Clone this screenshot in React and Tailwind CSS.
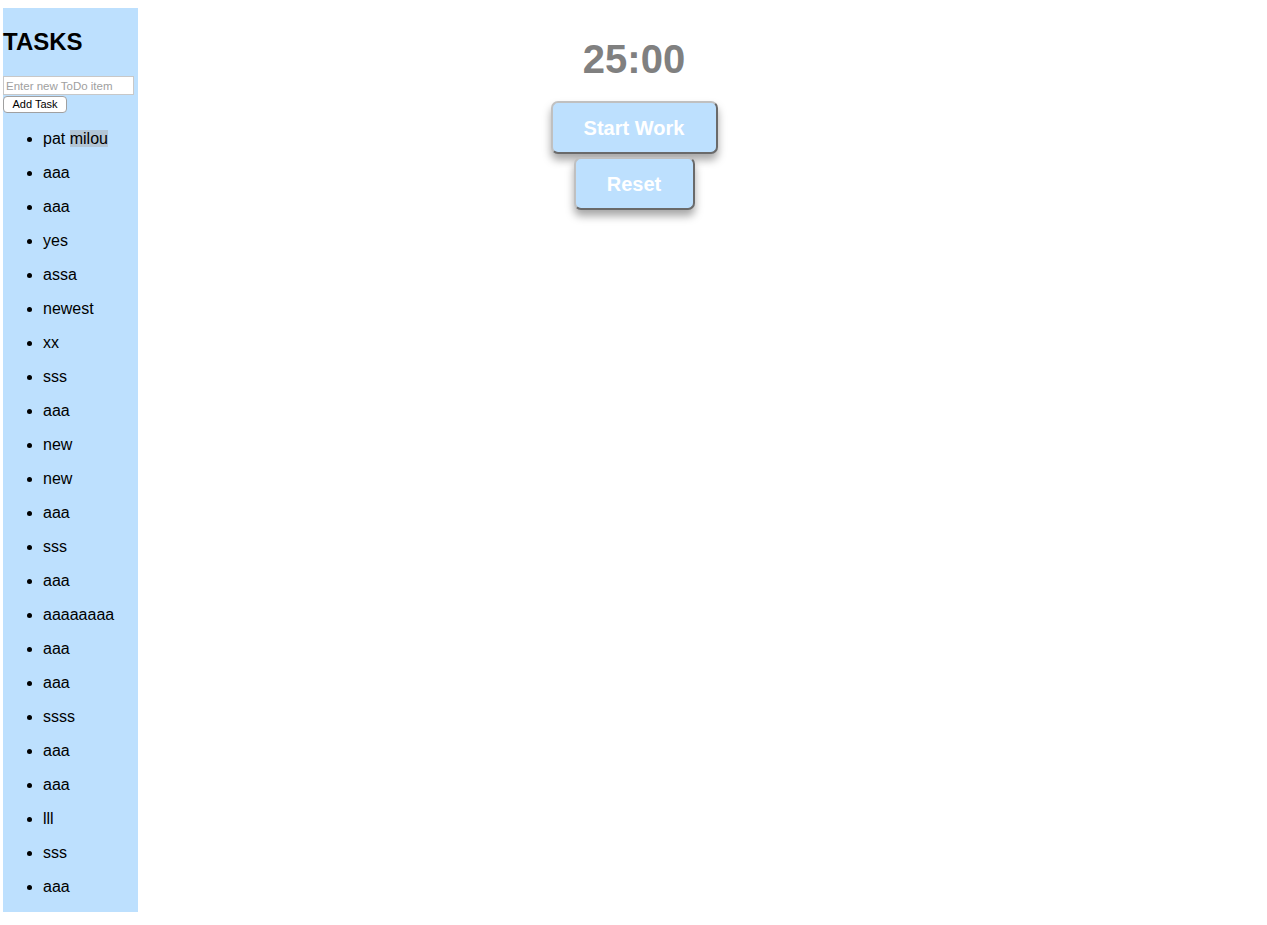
import React from "react";

const tasks = ["pat milou","aaa","aaa","yes","assa","newest","xx","sss","aaa","new","new","aaa","sss","aaa","aaaaaaaa","aaa","aaa","ssss","aaa","aaa","lll","sss","aaa"];

export default function App() {
  return (
    <div className="w-[1267px] min-h-[925px] bg-white grid grid-cols-[138px_1fr_140px] pt-[8px] pl-[3px] font-['Liberation_Sans',Arial,sans-serif] text-black">
      <aside className="w-[135px] h-[904px] bg-[#bde0fe] flex flex-col">
        <h2 className="text-[24px] font-bold leading-[28px] mt-[20px] mb-[20px]">TASKS</h2>
        <input
          placeholder="Enter new ToDo item"
          className="w-[131px] h-[19px] bg-white border border-[#c8c8c8] text-[11.5px] px-[2px] placeholder:text-[#a0a0a0] outline-none"
        />
        <button className="self-start mt-[1px] w-[64px] h-[17px] bg-white border border-[#a0a0a0] rounded-[4px] text-[11px] leading-[15px] text-black">
          Add Task
        </button>
        <ul className="list-disc pl-[40px] mt-[9px] text-[16px]">
          {tasks.map((t, i) => (
            <li key={i} className="h-[34px] leading-[34px]">
              {i === 0 ? (
                <>pat <span className="bg-[#b3c6d6]">milou</span></>
              ) : t}
            </li>
          ))}
        </ul>
      </aside>
      <main className="flex flex-col items-center pt-[28px]">
        <div className="text-[40px] font-bold text-[#808080] leading-[46px]">25:00</div>
        <button className="mt-[19px] w-[167px] h-[53px] bg-[#bde0fe] rounded-[7px] border-2 border-t-[#c0c0c0] border-l-[#c0c0c0] border-r-[#6a6a6a] border-b-[#6a6a6a] text-white font-bold text-[20px] shadow-[0_6px_8px_rgba(0,0,0,0.35)]">
          Start Work
        </button>
        <button className="mt-[3px] w-[121px] h-[53px] bg-[#bde0fe] rounded-[7px] border-2 border-t-[#c0c0c0] border-l-[#c0c0c0] border-r-[#6a6a6a] border-b-[#6a6a6a] text-white font-bold text-[20px] shadow-[0_6px_8px_rgba(0,0,0,0.35)]">
          Reset
        </button>
      </main>
      <div />
    </div>
  );
}
